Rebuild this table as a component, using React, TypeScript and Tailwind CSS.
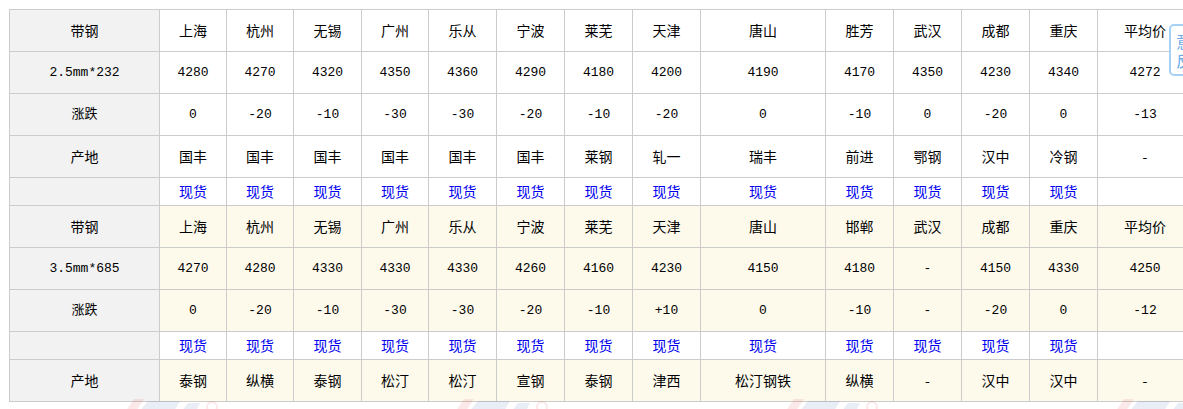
import React from "react";

const WIDTHS = [150, 67, 67, 68, 67, 68, 68, 68, 68, 125, 68, 68, 68, 68, 95];

const BLOCKS = [
  {
    spec: "2.5mm*232",
    cities: ["上海", "杭州", "无锡", "广州", "乐从", "宁波", "莱芜", "天津", "唐山", "胜芳", "武汉", "成都", "重庆", "平均价"],
    prices: ["4280", "4270", "4320", "4350", "4360", "4290", "4180", "4200", "4190", "4170", "4350", "4230", "4340", "4272"],
    changes: ["0", "-20", "-10", "-30", "-30", "-20", "-10", "-20", "0", "-10", "0", "-20", "0", "-13"],
    origins: ["国丰", "国丰", "国丰", "国丰", "国丰", "国丰", "莱钢", "轧一", "瑞丰", "前进", "鄂钢", "汉中", "冷钢", "-"],
    cream: false,
    originFirst: true,
  },
  {
    spec: "3.5mm*685",
    cities: ["上海", "杭州", "无锡", "广州", "乐从", "宁波", "莱芜", "天津", "唐山", "邯郸", "武汉", "成都", "重庆", "平均价"],
    prices: ["4270", "4280", "4330", "4330", "4330", "4260", "4160", "4230", "4150", "4180", "-", "4150", "4330", "4250"],
    changes: ["0", "-20", "-10", "-30", "-30", "-20", "-10", "+10", "0", "-10", "-", "-20", "0", "-12"],
    origins: ["泰钢", "纵横", "泰钢", "松汀", "松汀", "宣钢", "泰钢", "津西", "松汀钢铁", "纵横", "-", "汉中", "汉中", "-"],
    cream: true,
    originFirst: false,
  },
];

const cellBase = "border border-[#cccccc] text-center align-middle p-0";
const headCell = `${cellBase} bg-[#f2f2f2]`;
const monoText = "font-['Liberation_Mono','Noto_Sans_CJK_SC',monospace] text-[13px]";

function Row({ label, values, cream, mono }: { label: string; values: string[]; cream: boolean; mono?: boolean }) {
  return (
    <tr className="h-[42px]">
      <td className={`${headCell} ${mono ? monoText : ""}`}>{label}</td>
      {values.map((v, i) => (
        <td key={i} className={`${cellBase} ${cream ? "bg-[#fdfaec]" : "bg-white"} ${mono ? monoText : ""}`}>
          {v}
        </td>
      ))}
    </tr>
  );
}

function SpotRow() {
  return (
    <tr className="h-[28px]">
      <td className={headCell}></td>
      {Array.from({ length: 14 }).map((_, i) => (
        <td key={i} className={`${cellBase} bg-white`}>
          {i < 13 ? <a className="text-[#0000ee] cursor-pointer">现货</a> : null}
        </td>
      ))}
    </tr>
  );
}

// faint site logo showing under the table
function Watermark() {
  return (
    <svg width="110" height="14" viewBox="0 0 110 14" className="opacity-10">
      <path d="M6 14 L14 2 L24 2 L16 14 Z" fill="#d33" />
      <path d="M20 14 L28 4 L60 4 L54 14 Z" fill="#35a" />
      <path d="M62 14 L68 6 L80 6 L76 14 Z" fill="#35a" />
      <circle cx="92" cy="10" r="5" fill="none" stroke="#d33" strokeWidth="2" />
    </svg>
  );
}

export default function App() {
  return (
    <div className="relative w-[1183px] h-[409px] overflow-hidden bg-white text-black font-['Noto_Sans_CJK_SC',sans-serif] text-[14px]">
      <div className="pl-[9px] pt-[9px]">
        <table className="table-fixed border-collapse w-[1183px]">
          <colgroup>
            {WIDTHS.map((w, i) => (
              <col key={i} style={{ width: w }} />
            ))}
          </colgroup>
          <tbody>
            {BLOCKS.map((b, bi) => (
              <React.Fragment key={bi}>
                <Row label="带钢" values={b.cities} cream={b.cream} />
                <Row label={b.spec} values={b.prices} cream={b.cream} mono />
                <Row label="涨跌" values={b.changes} cream={b.cream} mono />
                {b.originFirst ? (
                  <>
                    <Row label="产地" values={b.origins} cream={b.cream} />
                    <SpotRow />
                  </>
                ) : (
                  <>
                    <SpotRow />
                    <Row label="产地" values={b.origins} cream={b.cream} />
                  </>
                )}
              </React.Fragment>
            ))}
          </tbody>
        </table>
      </div>

      <div className="absolute left-[120px] top-[397px] flex gap-[220px]">
        <Watermark />
        <Watermark />
        <Watermark />
        <Watermark />
      </div>

      {/* floating feedback widget, clipped by the window edge */}
      <div className="absolute left-[1169px] top-[24px] w-[48px] h-[52px] rounded-[5px] border-2 border-[#a6d0f4] bg-white grid grid-cols-2 content-center gap-y-[3px] text-[#6aa9e6] text-[16px] leading-none pl-[5px]">
        <span>意</span>
        <span>见</span>
        <span>反</span>
        <span>馈</span>
      </div>
    </div>
  );
}
